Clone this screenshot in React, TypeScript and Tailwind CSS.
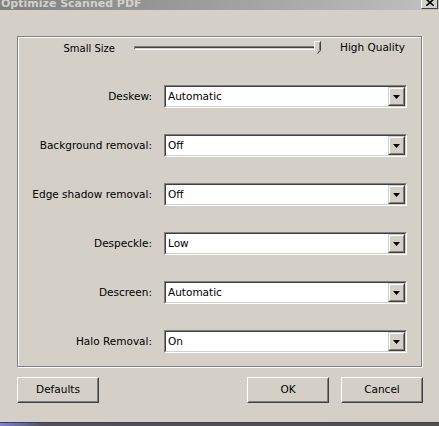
import React from "react";

const ROWS = [
  { label: "Deskew:", value: "Automatic" },
  { label: "Background removal:", value: "Off" },
  { label: "Edge shadow removal:", value: "Off" },
  { label: "Despeckle:", value: "Low" },
  { label: "Descreen:", value: "Automatic" },
  { label: "Halo Removal:", value: "On" },
];

function Combo({ value }: { value: string }) {
  return (
    <div className="w-[243px] h-[23px] border border-t-[#808080] border-l-[#808080] border-b-white border-r-white">
      <div className="h-full flex items-center bg-white border border-t-[#404040] border-l-[#404040] border-b-[#d4d0c8] border-r-[#d4d0c8]">
        <span className="flex-1 pl-[2px] leading-none">{value}</span>
        <div className="w-[17px] h-full bg-[#d4d0c8] border border-t-[#d4d0c8] border-l-[#d4d0c8] border-b-[#404040] border-r-[#404040]">
          <div className="h-full flex items-center justify-center border border-t-white border-l-white border-b-[#808080] border-r-[#808080]">
            <svg width="7" height="4" viewBox="0 0 7 4">
              <path d="M0 0h7L3.5 4z" fill="#000" />
            </svg>
          </div>
        </div>
      </div>
    </div>
  );
}

function Button({ children, className }: { children: React.ReactNode; className?: string }) {
  return (
    <div
      className={`w-[82px] h-[26px] border border-t-white border-l-white border-b-[#404040] border-r-[#404040] ${className ?? ""}`}
    >
      <div className="h-full flex items-center justify-center border border-t-[#d4d0c8] border-l-[#d4d0c8] border-b-[#808080] border-r-[#808080]">
        {children}
      </div>
    </div>
  );
}

export default function App() {
  return (
    <div className="w-[439px] h-[426px] bg-[#d4d0c8] flex flex-col overflow-hidden font-['DejaVu_Sans',sans-serif] text-[10.5px] text-black">
      {/* title bar, cut at the top */}
      <div className="relative h-[10px] shrink-0 bg-gradient-to-r from-[#808080] to-[#c0c0c0] overflow-hidden">
        <span className="absolute left-[1px] top-[-2px] text-[11px] leading-[11px] font-bold text-[#d4d0c8] whitespace-nowrap">
          Optimize Scanned PDF
        </span>
        <div className="absolute left-[421px] top-[-5px] w-[17px] h-[14px] bg-[#d4d0c8] border border-t-white border-l-white border-b-[#404040] border-r-[#404040] flex items-center justify-center">
          <svg width="8" height="7" viewBox="0 0 8 7" className="mt-[1px]">
            <path d="M0 0l8 7M8 0L0 7" stroke="#000" strokeWidth="1.6" />
          </svg>
        </div>
      </div>

      <div className="mt-[26px] ml-[17px] w-[405px] h-[331px] border border-[#808080] shadow-[inset_1px_1px_0_#fff,1px_1px_0_#fff] flex flex-col">
        <div className="mt-[1px] h-[20px] flex items-center">
          <span className="w-[97px] text-right text-[10px]">Small Size</span>
          <div className="relative ml-[19px] w-[187px] h-[20px] flex items-center">
            <div className="w-full h-[4px] border border-t-[#808080] border-l-[#808080] border-b-white border-r-white">
              <div className="h-full border-t border-[#404040] bg-[#d4d0c8]" />
            </div>
            <svg className="absolute right-0 top-[3px]" width="7" height="13" viewBox="0 0 7 13">
              <path d="M0.5 0.5h6v9l-3 3l-3-3z" fill="#d4d0c8" />
              <path d="M0.5 10V0.5h5.5" stroke="#fff" fill="none" />
              <path d="M6.5 0.5v9.2l-3 3" stroke="#404040" fill="none" />
              <path d="M5.5 1.5v7.8l-2 2" stroke="#808080" fill="none" />
            </svg>
          </div>
          <span className="ml-[19px]">High Quality</span>
        </div>

        <div className="mt-[27px] flex flex-col gap-[26px]">
          {ROWS.map((r) => (
            <div key={r.label} className="h-[23px] flex items-center">
              <span className="w-[134px] text-right">{r.label}</span>
              <div className="ml-[12px]">
                <Combo value={r.value} />
              </div>
            </div>
          ))}
        </div>
      </div>

      <div className="mt-[10px] flex">
        <Button className="ml-[17px]">Defaults</Button>
        <Button className="ml-[148px]">OK</Button>
        <Button className="ml-[12px]">Cancel</Button>
      </div>

      <div className="flex-1" />
      <div className="h-[1px] shrink-0 bg-[#404040]" />
      <div className="h-[3px] shrink-0 bg-gradient-to-r from-[#8080e0] via-[#505060] via-[10%] to-[#505050]" />
    </div>
  );
}
